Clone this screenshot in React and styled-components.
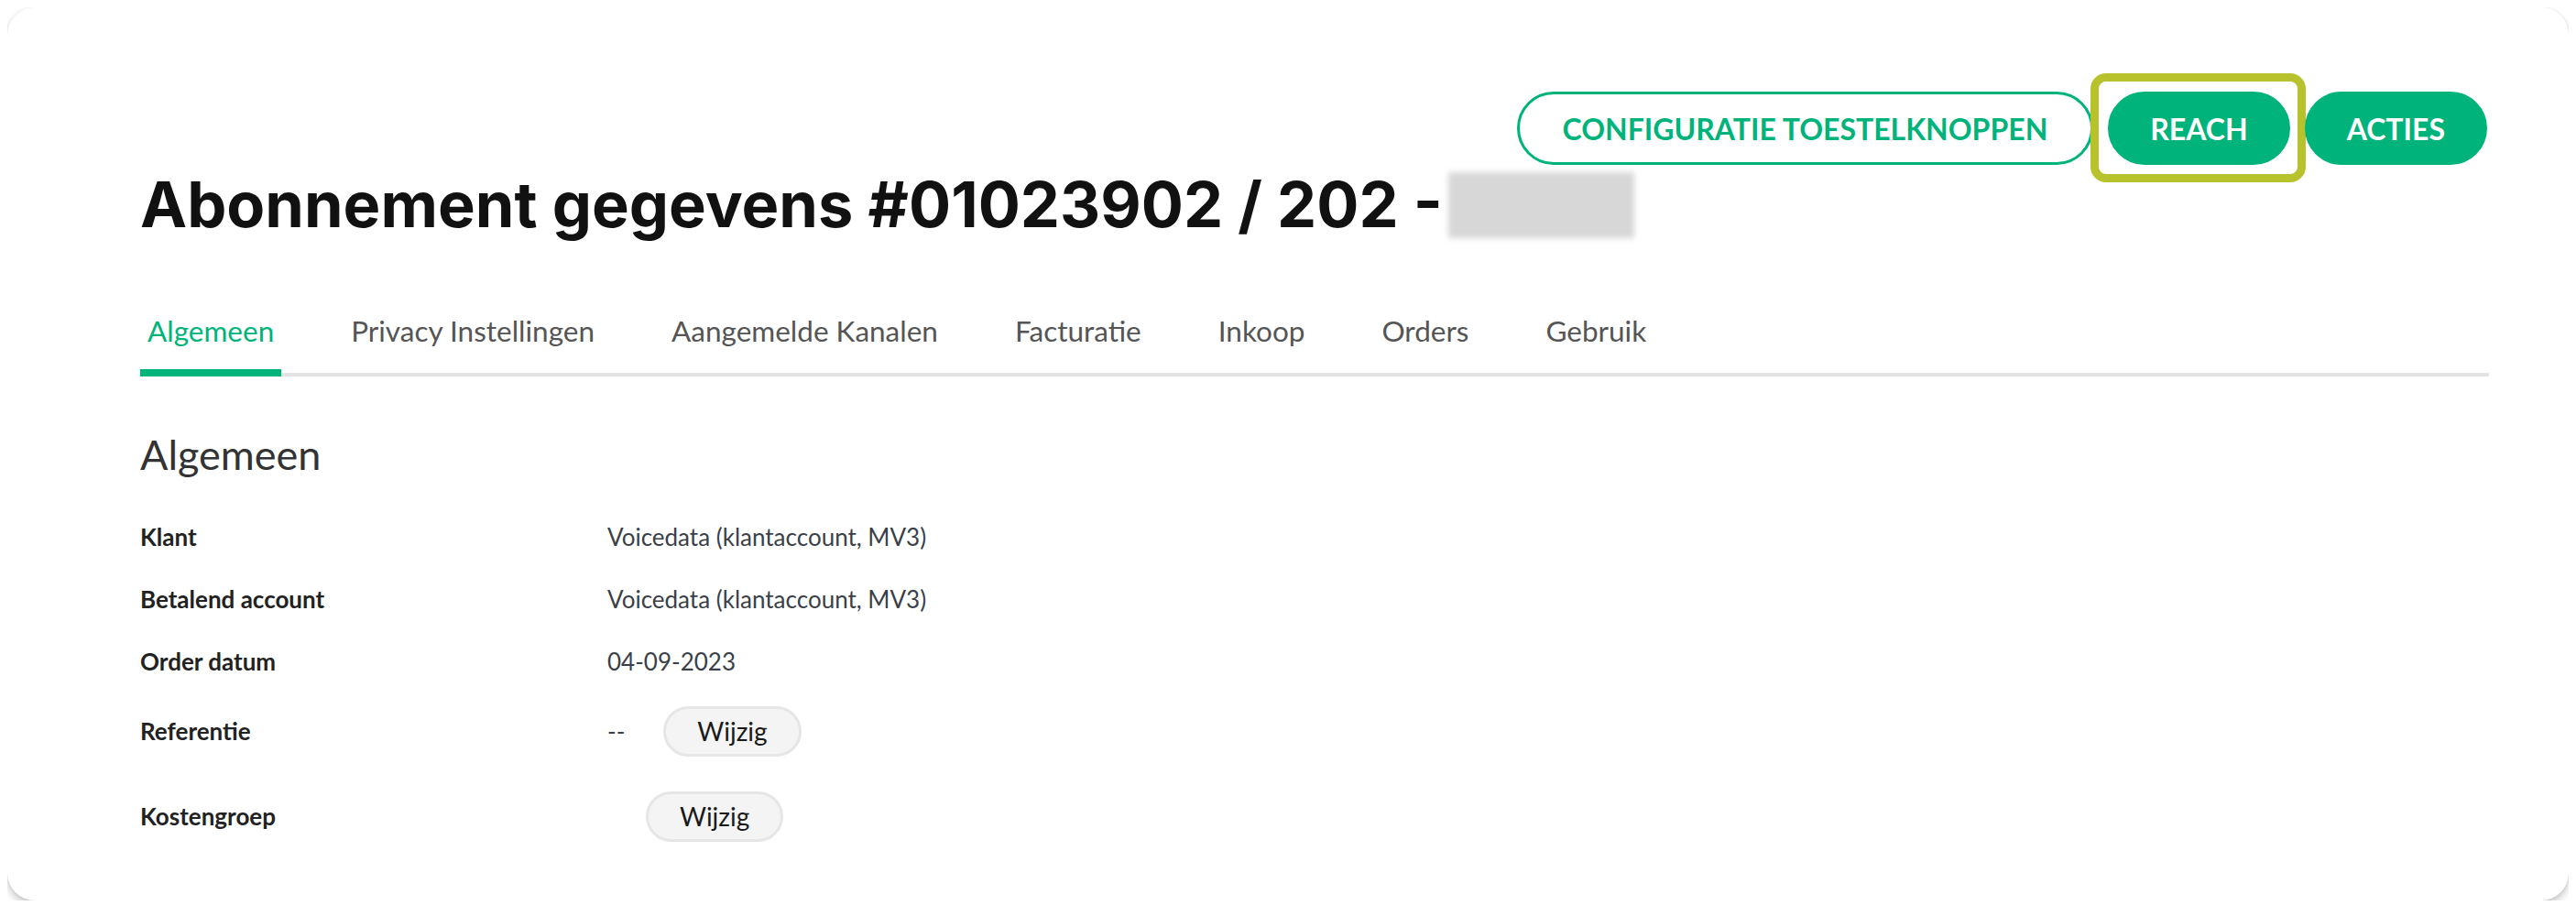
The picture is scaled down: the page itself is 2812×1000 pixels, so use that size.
import React from "react";
import styled, { createGlobalStyle } from "styled-components";

const GREEN = "#00b37b";

const GlobalStyle = createGlobalStyle`
  body {
    margin: 8px;
    background: #ffffff;
    font-family: "Lato", "Liberation Sans", sans-serif;
    color: #222;
  }
`;

const Card = styled.div`
  height: 975px;
  box-sizing: border-box;
  background: #fff;
  border-radius: 30px;
  box-shadow: 0 5px 9px rgba(0, 0, 0, 0.22), 0 0 3px rgba(0, 0, 0, 0.08);
  padding: 92px 87px 0 145px;
`;

const ButtonRow = styled.div`
  display: flex;
  justify-content: flex-end;
  gap: 16px;
  padding-right: 2px;
`;

const PillButton = styled.button`
  position: relative;
  height: 80px;
  padding: ${(p) => (p.$outline ? "0 47px" : "0 43px")};
  border-radius: 40px;
  border: 3px solid ${GREEN};
  background: ${(p) => (p.$outline ? "#fff" : GREEN)};
  color: ${(p) => (p.$outline ? GREEN : "#fff")};
  font-family: "Lato", sans-serif;
  font-weight: 700;
  font-size: 32px;
  text-transform: uppercase;
`;

const Highlight = styled.span`
  position: absolute;
  top: -23px;
  bottom: -22px;
  left: -22px;
  right: -20px;
  border: 9px solid #b7c22c;
  border-radius: 17px;
  pointer-events: none;
`;

const Title = styled.h1`
  margin: 8px 0 0;
  font-family: "Inter", sans-serif;
  font-weight: 700;
  font-size: 68.5px;
  line-height: 1;
  color: #111;
  display: flex;
  align-items: center;
`;

const Redacted = styled.span`
  display: inline-block;
  width: 203px;
  height: 72px;
  margin-left: 6px;
  background: #d7d7d7;
  filter: blur(3px);
`;

const TabBar = styled.div`
  display: flex;
  margin-top: 84px;
  border-bottom: 4px solid #e3e3e3;
`;

const Tab = styled.div`
  padding: 0 8px 25px;
  margin-right: 68px;
  margin-bottom: -4px;
  font-size: 31.5px;
  line-height: 34px;
  color: ${(p) => (p.$active ? GREEN : "#555")};
  border-bottom: 8px solid ${(p) => (p.$active ? GREEN : "transparent")};
`;

const SectionTitle = styled.h2`
  margin: 61px 0 32px;
  font-size: 45px;
  font-weight: 400;
  line-height: 48px;
  color: #333;
`;

const Row = styled.div`
  display: grid;
  grid-template-columns: 510px auto;
  align-items: center;
  height: ${(p) => p.$h}px;
  font-size: 26px;
`;

const Label = styled.div`
  font-weight: 700;
  color: #222;
`;

const Value = styled.div`
  display: flex;
  align-items: center;
  color: #3b3f48;
`;

const EditButton = styled.button`
  height: 55px;
  margin-left: 42px;
  padding: 0 34px;
  border-radius: 28px;
  border: 3px solid #e6e6e6;
  background: #f4f4f4;
  color: #1a1a1a;
  font-family: "Lato", sans-serif;
  font-size: 28px;
`;

const TABS = [
  "Algemeen",
  "Privacy Instellingen",
  "Aangemelde Kanalen",
  "Facturatie",
  "Inkoop",
  "Orders",
  "Gebruik",
];

const ROWS = [
  { label: "Klant", value: "Voicedata (klantaccount, MV3)", h: 68 },
  { label: "Betalend account", value: "Voicedata (klantaccount, MV3)", h: 68 },
  { label: "Order datum", value: "04-09-2023", h: 68 },
  { label: "Referentie", value: "--", edit: true, h: 84 },
  { label: "Kostengroep", value: "", edit: true, h: 102 },
];

export default function App() {
  return (
    <>
      <GlobalStyle />
      <Card>
        <ButtonRow>
          <PillButton $outline>Configuratie toestelknoppen</PillButton>
          <PillButton>
            Reach
            <Highlight />
          </PillButton>
          <PillButton>Acties</PillButton>
        </ButtonRow>
        <Title>
          Abonnement gegevens #01023902 / 202 -<Redacted />
        </Title>
        <TabBar>
          {TABS.map((t, i) => (
            <Tab key={t} $active={i === 0}>
              {t}
            </Tab>
          ))}
        </TabBar>
        <SectionTitle>Algemeen</SectionTitle>
        {ROWS.map((r) => (
          <Row key={r.label} $h={r.h}>
            <Label>{r.label}</Label>
            <Value>
              {r.value}
              {r.edit && <EditButton>Wijzig</EditButton>}
            </Value>
          </Row>
        ))}
      </Card>
    </>
  );
}
